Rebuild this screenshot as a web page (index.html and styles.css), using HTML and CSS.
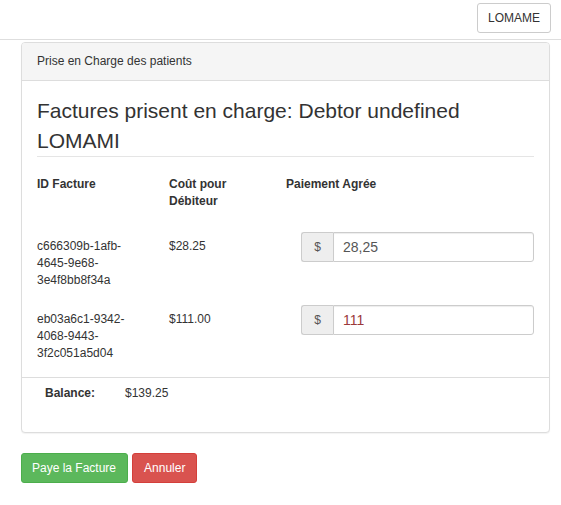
FILE: index.html
```html
<!DOCTYPE html>
<html lang="fr">
<head>
<meta charset="utf-8">
<title>Prise en Charge des patients</title>
<link rel="stylesheet" href="styles.css">
</head>
<body>
<header class="topbar">
  <button class="btn btn-default">LOMAME</button>
</header>
<main class="main">
  <section class="panel">
    <div class="panel-heading">Prise en Charge des patients</div>
    <div class="panel-body">
      <h3 class="title">Factures prisent en charge: Debtor undefined LOMAMI</h3>
      <div class="grid head">
        <div class="c1">ID Facture</div>
        <div class="c2">Coût pour Débiteur</div>
        <div class="c3">Paiement Agrée</div>
      </div>
      <div class="grid row first">
        <div class="c1 txt">c666309b-<wbr>1afb-<wbr>4645-<wbr>9e68-<wbr>3e4f8bb8f34a</div>
        <div class="c2 txt">$28.25</div>
        <div class="c3 inp">
          <div class="input-group">
            <span class="addon">$</span>
            <input class="field" type="text" value="28,25">
          </div>
        </div>
      </div>
      <div class="grid row">
        <div class="c1 txt">eb03a6c1-<wbr>9342-<wbr>4068-<wbr>9443-<wbr>3f2c051a5d04</div>
        <div class="c2 txt">$111.00</div>
        <div class="c3 inp">
          <div class="input-group">
            <span class="addon">$</span>
            <input class="field error" type="text" value="111">
          </div>
        </div>
      </div>
    </div>
    <div class="balance">
      <span class="label">Balance:</span>
      <span class="value">$139.25</span>
    </div>
  </section>
  <div class="actions">
    <button class="btn btn-success">Paye la Facture</button>
    <button class="btn btn-danger">Annuler</button>
  </div>
</main>
</body>
</html>
```
FILE: styles.css
```css
* { box-sizing: border-box; }
html, body {
  margin: 0;
  background: #fff;
}
body {
  font-family: "Liberation Sans", Arial, Helvetica, sans-serif;
  font-size: 12px;
  line-height: 17px;
  color: #333;
}
.topbar {
  display: flex;
  justify-content: flex-end;
  padding: 3px 10px 6px 0;
  border-bottom: 1px solid #dedede;
}
.btn {
  font-family: inherit;
  font-size: 12px;
  line-height: 18px;
  height: 30px;
  padding: 5px 10px;
  border: 1px solid transparent;
  border-radius: 3px;
  cursor: pointer;
}
.btn-default {
  background: #fff;
  color: #333;
  border-color: #ccc;
}
.btn-success {
  background: #5cb85c;
  color: #fff;
  border-color: #4cae4c;
  padding: 5px 11px 5px 10px;
}
.btn-danger {
  background: #d9534f;
  color: #fff;
  border-color: #d43f3a;
  padding: 5px 11px 5px 11px;
}
.main {
  margin: 2px 11px 0 21px;
}
.panel {
  border: 1px solid #ddd;
  border-radius: 4px;
  background: #fff;
  box-shadow: 0 1px 1px rgba(0,0,0,0.05);
}
.panel-heading {
  background: #f5f5f5;
  border-bottom: 1px solid #ddd;
  border-radius: 3px 3px 0 0;
  padding: 10px 15px;
}
.panel-body {
  padding: 15px 15px 15px;
}
.title {
  margin: 0;
  font-size: 21px;
  line-height: 30px;
  font-weight: 400;
  color: #333;
  border-bottom: 1px solid #e5e5e5;
}
.grid {
  display: grid;
  grid-template-columns: 132px 117px 1fr;
  align-items: start;
}
.c1 { padding-right: 30px; }
.c2 { padding-right: 15px; }
.head {
  margin-top: 19px;
  font-weight: 700;
}
.row { margin-top: 16px; }
.row.first { margin-top: 22px; }
.txt { padding-top: 6px; }
.inp { padding-left: 15px; }
.input-group {
  display: flex;
  height: 30px;
}
.addon {
  width: 32px;
  flex: none;
  background: #eee;
  border: 1px solid #ccc;
  border-right: 0;
  border-radius: 3px 0 0 3px;
  color: #555;
  font-size: 12px;
  line-height: 28px;
  text-align: center;
}
.field {
  flex: 1;
  min-width: 0;
  height: 30px;
  border: 1px solid #ccc;
  border-radius: 0 3px 3px 0;
  padding: 0 9px;
  font-family: inherit;
  font-size: 14px;
  color: #555;
  background: #fff;
  outline: none;
  box-shadow: inset 0 1px 1px rgba(0,0,0,0.075);
}
.field.error { color: #9b3a3a; }
.balance {
  border-top: 1px solid #ddd;
  padding: 7px 0 30px 23px;
  display: flex;
}
.balance .label {
  width: 80px;
  font-weight: 700;
}
.actions {
  margin-top: 20px;
  display: flex;
  gap: 4px;
}
```
